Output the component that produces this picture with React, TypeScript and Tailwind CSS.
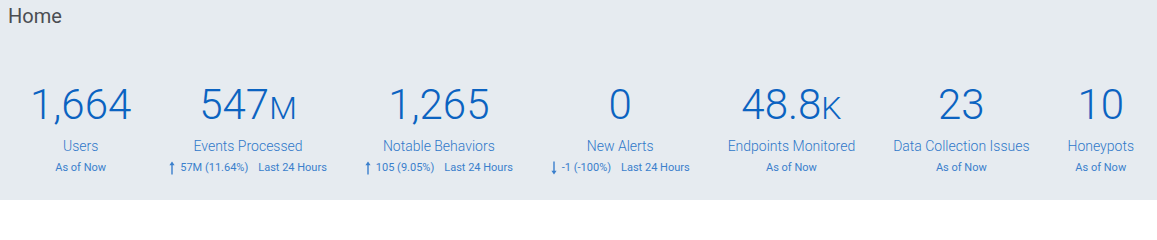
import React from "react";

type Stat = {
  value: string;
  suffix?: string;
  label: string;
  change?: { dir: "up" | "down"; text: string };
};

const stats: Stat[] = [
  { value: "1,664", label: "Users" },
  { value: "547", suffix: "M", label: "Events Processed", change: { dir: "up", text: "57M (11.64%)" } },
  { value: "1,265", label: "Notable Behaviors", change: { dir: "up", text: "105 (9.05%)" } },
  { value: "0", label: "New Alerts", change: { dir: "down", text: "-1 (-100%)" } },
  { value: "48.8", suffix: "K", label: "Endpoints Monitored" },
  { value: "23", label: "Data Collection Issues" },
  { value: "10", label: "Honeypots" },
];

function Arrow({ dir }: { dir: "up" | "down" }) {
  return (
    <svg width="6" height="14" viewBox="0 0 6 14" className={dir === "down" ? "rotate-180" : ""}>
      <path d="M3 0.5 L5.6 4.2 L3.7 4.2 L3.7 13.5 L2.3 13.5 L2.3 4.2 L0.4 4.2 Z" fill="#3a7fcc" />
    </svg>
  );
}

export default function App() {
  return (
    <div
      className="w-[1157px] h-[200px] bg-[#e6ebf0] overflow-hidden"
      style={{ fontFamily: "Roboto, 'Noto Sans', sans-serif" }}
    >
      <div className="pl-[8px] pt-[4px] text-[20px] leading-[24px] text-[#4a4d52]">Home</div>
      <div className="flex justify-between pl-[30px] pr-[23px] pt-[55px]">
        {stats.map((s) => (
          <div key={s.label} className="flex flex-col items-center">
            <div className="h-[44px] text-[42px] leading-[44px] font-light text-[#0b63c1] whitespace-nowrap">
              {s.value}
              {s.suffix && <span className="text-[32px] leading-none">{s.suffix}</span>}
            </div>
            <div className="mt-[10px] text-[14px] leading-[18px] font-light text-[#2f78c9] whitespace-nowrap">
              {s.label}
            </div>
            <div className="mt-[6px] flex items-center h-[14px] text-[11px] leading-[14px] text-[#3a7fcc] whitespace-nowrap">
              {s.change ? (
                <>
                  <span className="mr-[5px] flex items-center">
                    <Arrow dir={s.change.dir} />
                  </span>
                  <span>{s.change.text}</span>
                  <span className="ml-[10px]">Last 24 Hours</span>
                </>
              ) : (
                <span>As of Now</span>
              )}
            </div>
          </div>
        ))}
      </div>
    </div>
  );
}
